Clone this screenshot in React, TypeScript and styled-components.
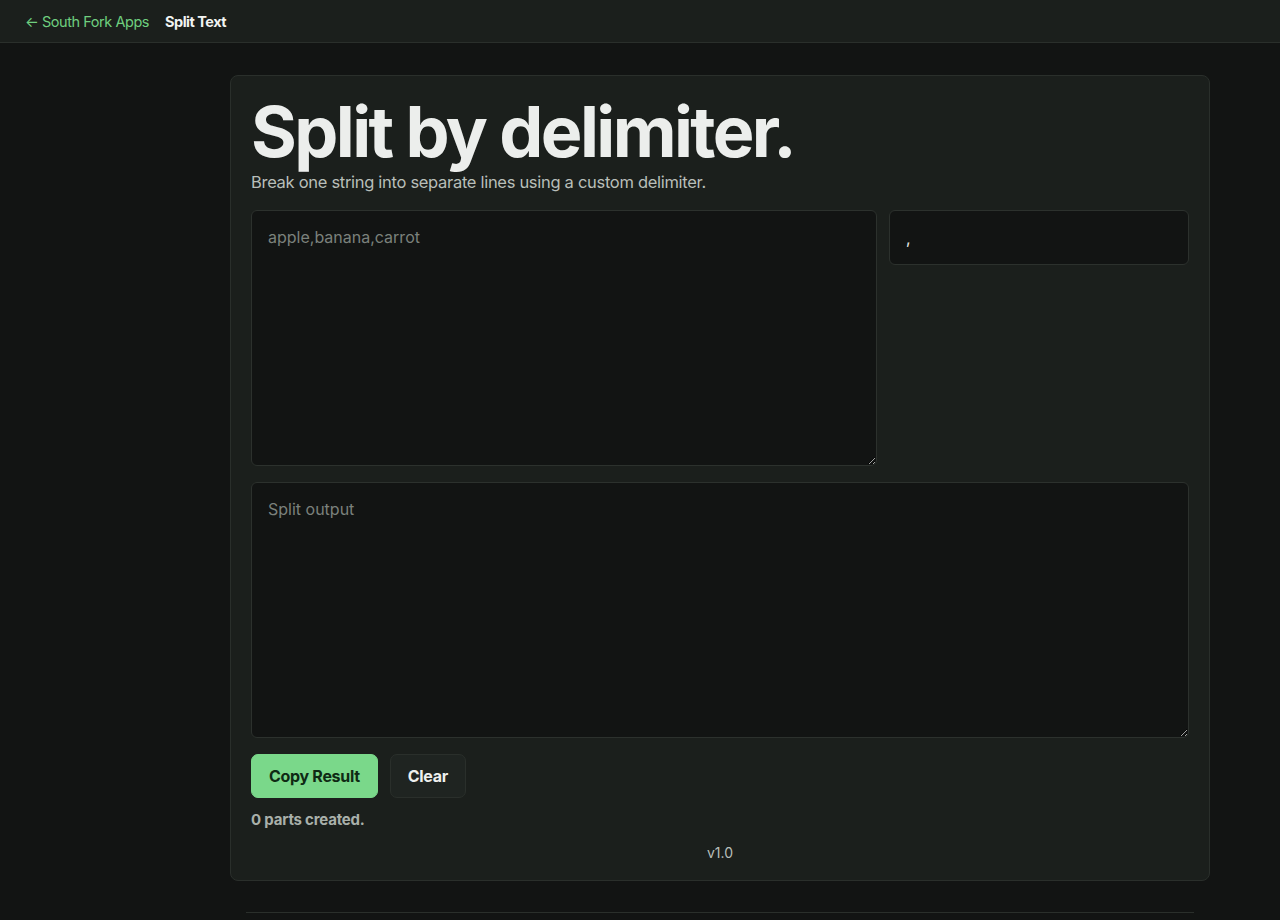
import { useState } from "react";
import styled, { createGlobalStyle } from "styled-components";

const GlobalStyle = createGlobalStyle`
    html, body {
        margin: 0;
        padding: 0;
        background: #121413;
        color: #e8ebe8;
        font-family: Inter, "Noto Sans", sans-serif;
    }
    * { box-sizing: border-box; }
`;

const TopBar = styled.header`
    height: 43px;
    display: flex;
    align-items: center;
    gap: 16px;
    padding: 0 25px;
    background: #1b1f1c;
    border-bottom: 1px solid #2a2f2b;
    font-size: 14.5px;
`;

const BackLink = styled.a`
    color: #6fcf7f;
    text-decoration: none;
    letter-spacing: -0.45px;
`;

const Crumb = styled.span`
    color: #f2f4f2;
    font-weight: 700;
    letter-spacing: -0.5px;
`;

const Main = styled.main`
    width: 980px;
    margin: 32px 0 0 230px;
`;

const Card = styled.section`
    background: #1b1f1c;
    border: 1px solid #2a2f2b;
    border-radius: 8px;
    padding: 17px 20px 19px;
`;

const Title = styled.h1`
    margin: 0;
    font-size: 70px;
    font-weight: 700;
    line-height: 78px;
    letter-spacing: -2.6px;
    color: #eceeec;
`;

const Lead = styled.p`
    margin: 1px 0 18px;
    font-size: 16.5px;
    line-height: 20px;
    color: #b8beb9;
    letter-spacing: -0.3px;
`;

const InputRow = styled.div`
    display: grid;
    grid-template-columns: 1fr 300px;
    gap: 12px;
    align-items: start;
`;

const Area = styled.textarea`
    width: 100%;
    height: 256px;
    display: block;
    padding: 16px;
    background: #121413;
    color: #e8ebe8;
    border: 1px solid #2c312d;
    border-radius: 6px;
    font: inherit;
    font-size: 16px;
    resize: vertical;
    outline: none;
    &::placeholder { color: #7b817c; }
`;

const DelimInput = styled.input`
    width: 100%;
    height: 55px;
    padding: 0 16px;
    background: #121413;
    color: #e8ebe8;
    border: 1px solid #2c312d;
    border-radius: 6px;
    font: inherit;
    font-size: 16px;
    outline: none;
`;

const OutputWrap = styled.div`
    margin-top: 16px;
`;

const Actions = styled.div`
    display: flex;
    gap: 12px;
    margin-top: 16px;
`;

const Button = styled.button<{ $primary?: boolean }>`
    height: 44px;
    padding: 0 17px;
    border-radius: 7px;
    font: inherit;
    font-size: 16px;
    font-weight: 700;
    letter-spacing: -0.3px;
    cursor: pointer;
    background: ${(p) => (p.$primary ? "#7ad88a" : "#1f2421")};
    color: ${(p) => (p.$primary ? "#0f2a14" : "#eef0ee")};
    border: 1px solid ${(p) => (p.$primary ? "#7ad88a" : "#2a2f2b")};
`;

const Status = styled.p`
    margin: 12px 0 0;
    font-size: 15px;
    font-weight: 700;
    color: #a9b0aa;
    letter-spacing: -0.2px;
`;

const Version = styled.p`
    margin: 15px 0 0;
    text-align: center;
    font-size: 14px;
    color: #b8beb9;
`;

const FooterRule = styled.hr`
    margin: 31px 16px 0;
    border: 0;
    border-top: 1px solid #2a2f2b;
`;

export default function App() {
    const [input, setInput] = useState("");
    const [delim, setDelim] = useState(",");
    const parts = input.length ? input.split(delim || ",") : [];

    return (
        <>
        <GlobalStyle />
        <TopBar>
            <BackLink href="#">← South Fork Apps</BackLink>
            <Crumb>Split Text</Crumb>
        </TopBar>
        <Main>
            <Card>
                <Title>Split by delimiter.</Title>
                <Lead>Break one string into separate lines using a custom delimiter.</Lead>
                <InputRow>
                    <Area
                        placeholder="apple,banana,carrot"
                        value={input}
                        onChange={(e) => setInput(e.target.value)}
                    />
                    <DelimInput value={delim} onChange={(e) => setDelim(e.target.value)} />
                </InputRow>
                <OutputWrap>
                    <Area placeholder="Split output" readOnly value={parts.join("\n")} />
                </OutputWrap>
                <Actions>
                    <Button $primary>Copy Result</Button>
                    <Button onClick={() => setInput("")}>Clear</Button>
                </Actions>
                <Status>{parts.length} parts created.</Status>
                <Version>v1.0</Version>
            </Card>
            <FooterRule />
        </Main>
        </>
    );
}
